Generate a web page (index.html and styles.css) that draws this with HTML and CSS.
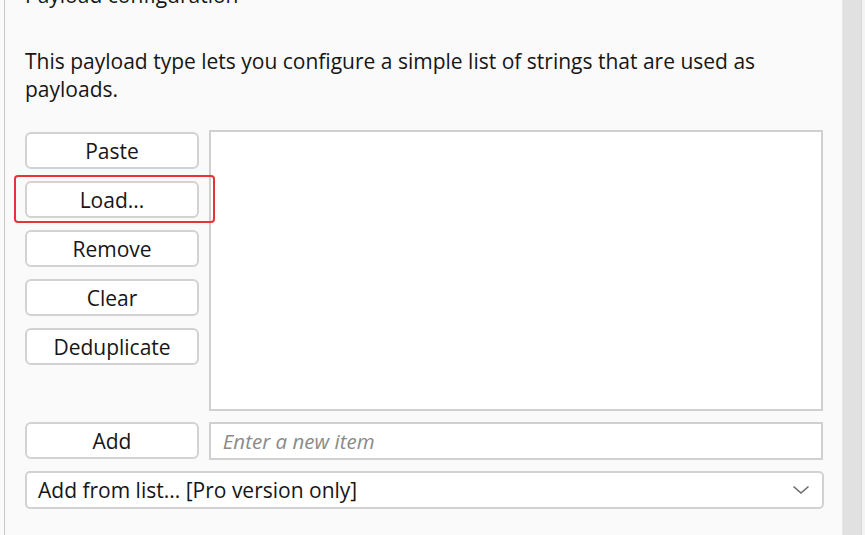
FILE: index.html
```html
<!DOCTYPE html>
<html>
<head>
<meta charset="utf-8">
<link rel="stylesheet" href="styles.css">
</head>
<body>
<div class="screen">
  <div class="panel">
    <div class="title">Payload configuration</div>
    <p class="desc">This payload type lets you configure a simple list of strings that are used as payloads.</p>
    <div class="editor">
      <div class="buttons">
        <button class="btn">Paste</button>
        <div class="highlight"><button class="btn">Load...</button></div>
        <button class="btn">Remove</button>
        <button class="btn">Clear</button>
        <button class="btn">Deduplicate</button>
      </div>
      <div class="listbox"></div>
    </div>
    <div class="addrow">
      <button class="btn">Add</button>
      <div class="input">Enter a new item</div>
    </div>
    <div class="select">
      <span>Add from list... [Pro version only]</span>
      <svg class="chev" width="18" height="10" viewBox="0 0 18 10"><path d="M1.5 1.5 L9 8 L16.5 1.5" fill="none" stroke="#6b6b6b" stroke-width="1.6"/></svg>
    </div>
  </div>
  <div class="scroll"></div>
  <div class="edge"></div>
</div>
</body>
</html>
```
FILE: styles.css
```css
html, body {
  margin: 0;
  padding: 0;
  background: #ffffff;
  overflow: hidden;
}
body {
  font-family: "Open Sans", "Noto Sans", sans-serif;
  color: #161616;
}
.screen {
  display: flex;
  height: 535px;
  width: 865px;
  padding-left: 4px;
  box-sizing: border-box;
  background: #fafafa;
}
.panel {
  width: 838px;
  box-sizing: border-box;
  border-left: 1px solid #c9c9c9;
  background: #fafafa;
  padding-left: 20px;
  padding-right: 19px;
}
.title {
  font-size: 21px;
  line-height: 24px;
  margin-top: -17px;
}
.desc {
  font-size: 21px;
  line-height: 28px;
  margin: 40px 0 0 0;
}
.editor {
  display: flex;
  margin-top: 27px;
  gap: 10px;
}
.buttons {
  display: flex;
  flex-direction: column;
  gap: 12px;
  padding-top: 2px;
}
.btn {
  width: 174px;
  height: 37px;
  box-sizing: border-box;
  border: 2px solid #d2d2d2;
  border-radius: 6px;
  background: #ffffff;
  font-family: inherit;
  font-size: 21px;
  color: #161616;
  padding: 0;
  margin: 0;
  display: block;
}
.highlight {
  position: relative;
  z-index: 1;
  margin: -6px -16px -5px -11px;
  padding: 4px 14px 3px 9px;
  border: 2px solid #e8323a;
  border-radius: 4px;
}
.listbox {
  width: 615px;
  height: 281px;
  box-sizing: border-box;
  border: 2px solid #d0d0d0;
  background: #ffffff;
}
.addrow {
  display: flex;
  gap: 10px;
  margin-top: 11px;
}
.input {
  width: 615px;
  height: 38px;
  box-sizing: border-box;
  border: 2px solid #d0d0d0;
  background: #ffffff;
  font-style: italic;
  font-size: 20.5px;
  color: #8a8a8a;
  padding-left: 12px;
  line-height: 34px;
}
.select {
  margin-top: 11px;
  width: 799px;
  height: 38px;
  box-sizing: border-box;
  border: 2px solid #d2d2d2;
  border-radius: 5px;
  background: #ffffff;
  display: flex;
  align-items: center;
  justify-content: space-between;
  padding: 0 12px 0 11px;
  font-size: 21px;
}
.chev {
  display: block;
}
.scroll {
  width: 19px;
  background: #e1e1e1;
  border-left: 1px solid #e8e8e8;
}
.edge {
  width: 3px;
  border-left: 1px solid #d8d8d8;
  background: #f4f4f4;
}
```
